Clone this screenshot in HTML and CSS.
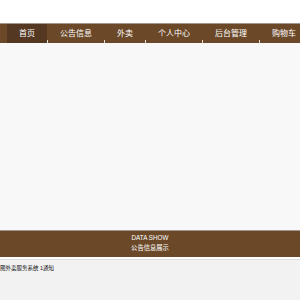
FILE: index.html
```html
<!DOCTYPE html>
<html lang="zh-CN">
<head>
    <meta charset="UTF-8">
    <meta name="viewport" content="width=device-width, initial-scale=1.0">
    <title>外卖服务系统</title>
    <link rel="stylesheet" href="styles.css">
</head>
<body>
    <div class="top"></div>
    <div class="nav">
        <div class="nav-item active">首页</div>
        <div class="nav-item">公告信息</div>
        <div class="nav-item">外卖</div>
        <div class="nav-item">个人中心</div>
        <div class="nav-item">后台管理</div>
        <div class="nav-item">购物车</div>
    </div>

    <div class="content"></div>

    <div class="band">
        <div class="band-en">DATA SHOW</div>
        <div class="band-cn">公告信息展示</div>
    </div>

    <div class="footer">
        <div class="footer-text">图外卖服务系统 1通知</div>
    </div>
</body>
</html>
```

FILE: styles.css
```css
body {
    margin: 0;
    background: #f2f2f2;
    font-family: 'Liberation Sans', 'Noto Sans CJK SC', sans-serif;
    overflow: hidden;
}

.top {
    height: 23px;
    background: #ffffff;
}

.nav {
    display: flex;
    height: 19px;
    padding-left: 7px;
    background: #6b4828;
    border-top: 1px solid #a09890;
    white-space: nowrap;
}

.nav-item {
    position: relative;
    flex-shrink: 0;
    padding: 0 12px;
    margin-right: 1px;
    line-height: 19px;
    font-size: 8px;
    color: #ffffff;
}

.nav-item::after {
    content: '';
    position: absolute;
    right: -1px;
    bottom: 0;
    width: 1px;
    height: 3px;
    background: #e6ddd3;
}

.nav-item.active {
    background: #553822;
}

.content {
    height: 187px;
    background: #f8f8f8;
}

.band {
    height: 20px;
    padding: 2px 0 4px;
    background: #6b4828;
    border-top: 1px solid #a09890;
    text-align: center;
    color: #ffffff;
    font-size: 6.3px;
    line-height: 10px;
}

.footer {
    border-top: 2px solid #ffffff;
    box-shadow: inset 0 1px 0 #dddddd;
    padding-top: 5px;
    height: 40px;
}

.footer-text {
    font-size: 5.5px;
    line-height: 8px;
    color: #111111;
}
```
